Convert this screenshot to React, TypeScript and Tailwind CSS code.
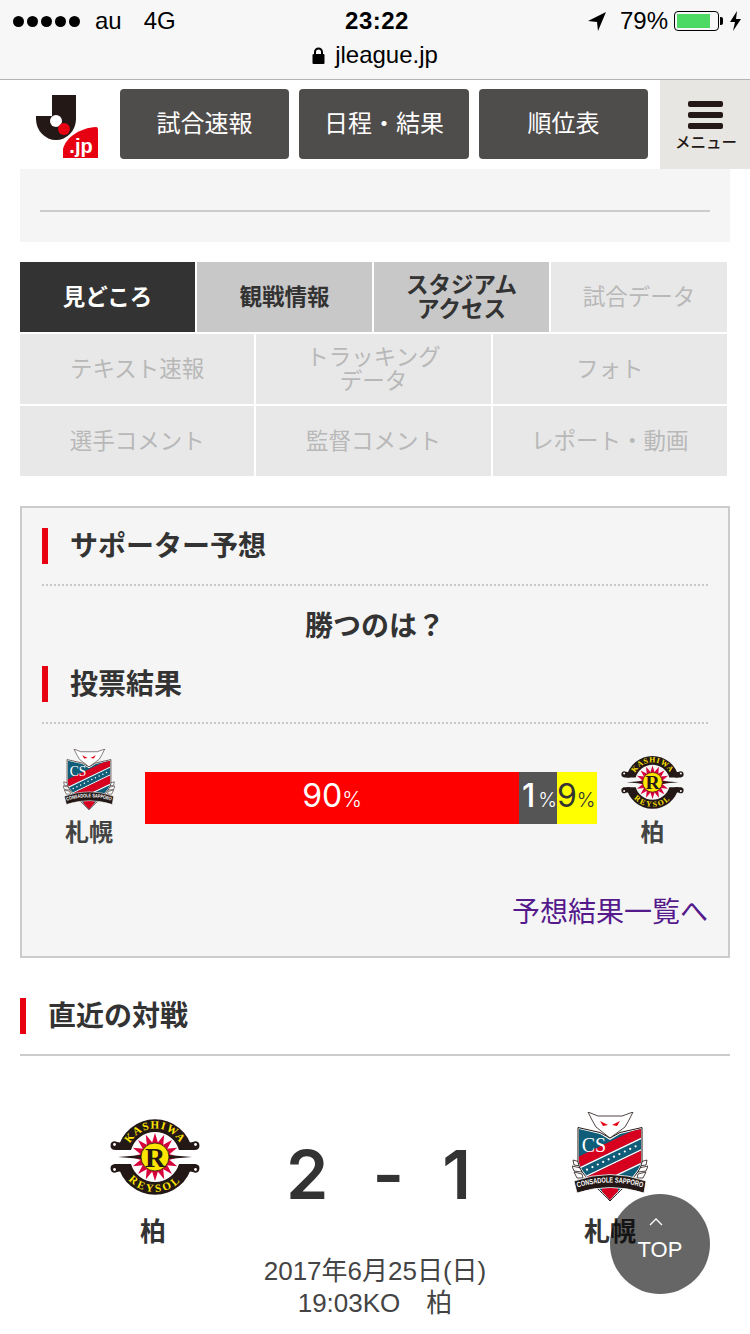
const SIGNAL = [0, 1, 2, 3, 4];

function StatusBar() {
  return (
    <div className="h-[80px] bg-[#f7f7f7] border-b-[1px] border-[#b4b4b4] relative">
      <div className="flex items-center justify-between h-[42px] pl-[13px] pr-[9px] text-[24px] text-black">
        <div className="flex items-center w-[230px]">
          <div className="flex gap-[3px]">
            {SIGNAL.map((i) => (
              <span key={i} className="w-[11px] h-[11px] rounded-full bg-black" />
            ))}
          </div>
          <span className="ml-[15px] leading-none">au</span>
          <span className="ml-[22px] leading-none">4G</span>
        </div>
        <span className="font-bold leading-none tracking-[0.5px]">23:22</span>
        <div className="flex items-center justify-end w-[230px]">
          <svg width="20" height="20" viewBox="0 0 20 20">
            <path d="M19 1 L1 10 L10 11 L11 20 Z" fill="#000" />
          </svg>
          <span className="ml-[13px] leading-none">79%</span>
          <div className="ml-[6px] w-[45px] h-[20px] border border-black rounded-[4px] p-[2px]">
            <div className="w-[33px] h-full bg-[#4cd964]" />
          </div>
          <span className="w-[3px] h-[8px] bg-black rounded-r-[2px] ml-[1px]" />
          <svg className="ml-[7px]" width="11" height="20" viewBox="0 0 11 20">
            <path d="M7 0 L0 11 L5 11 L3 20 L11 8 L6 8 Z" fill="#000" />
          </svg>
        </div>
      </div>
      <div className="flex items-center justify-center gap-[10px] text-[24px] text-black leading-none mt-[1px]">
        <svg width="13" height="17" viewBox="0 0 13 17">
          <path d="M3 7 V5 a3.5 3.5 0 0 1 7 0 V7" fill="none" stroke="#000" strokeWidth="2" />
          <rect x="0.5" y="7" width="12" height="10" rx="1" fill="#000" />
        </svg>
        <span>jleague.jp</span>
      </div>
    </div>
  );
}

function JLogo() {
  return (
    <svg width="63" height="64" viewBox="0 0 63 64">
      <path d="M16 0 H40 V24 A20 21 0 0 1 0 24 V21 H16 Z" fill="#231815" />
      <circle cx="20" cy="26" r="6" fill="#fff" />
      <circle cx="28" cy="34" r="6" fill="#e60012" />
      <path d="M25 63 V53 C28 40 44 32 62 31 V63 Z" fill="#fff" />
      <path d="M27 63 V54 C30 42 44 33 60 32 Q62 32 62 35 V63 Z" fill="#e60012" />
      <text x="45" y="58" textAnchor="middle" fontSize="20" fontWeight="700" fill="#fff" fontFamily="Liberation Sans">.jp</text>
    </svg>
  );
}

function NavButton({ label, width }: { label: string; width: string }) {
  return (
    <div className={`${width} h-[70px] rounded-[4px] bg-[#4f4d4b] text-white text-[24px] flex items-center justify-center`}>
      {label}
    </div>
  );
}

function Header() {
  return (
    <div className="flex h-[89px] bg-white">
      <div className="w-[120px] pl-[36px] pt-[15px]">
        <JLogo />
      </div>
      <div className="flex gap-[10px] pt-[9px]">
        <NavButton label="試合速報" width="w-[169px]" />
        <NavButton label="日程・結果" width="w-[170px]" />
        <NavButton label="順位表" width="w-[169px]" />
      </div>
      <div className="ml-[12px] w-[90px] bg-[#e8e6e2] flex flex-col items-center pt-[21px]">
        <div className="flex flex-col gap-[5px]">
          <span className="block w-[35px] h-[6px] rounded-[2px] bg-[#231815]" />
          <span className="block w-[35px] h-[6px] rounded-[2px] bg-[#231815]" />
          <span className="block w-[35px] h-[6px] rounded-[2px] bg-[#231815]" />
        </div>
        <span className="text-[15.5px] leading-none text-[#231815] mt-[6px] ml-[2px] font-medium">メニュー</span>
      </div>
    </div>
  );
}

function Tab({ label, active, on, className }: { label: string; active?: boolean; on?: boolean; className: string }) {
  const tone = active
    ? "bg-[#333333] text-white font-bold"
    : on
      ? "bg-[#c8c8c8] text-[#333333] font-bold"
      : "bg-[#e8e8e8] text-[#b8b8b8]";
  return (
    <div className={`${className} h-[70px] pt-[1px] flex items-center justify-center text-center text-[22.5px] leading-[24px] ${tone}`}>
      {label}
    </div>
  );
}

function Tabs() {
  return (
    <div className="mt-[20px] ml-[20px] w-[707px] flex flex-col gap-[2px]">
      <div className="flex gap-[2px]">
        <Tab label="見どころ" active className="w-[175px]" />
        <Tab label="観戦情報" on className="w-[175px]" />
        <Tab label={"スタジアム\nアクセス"} on className="w-[175px] whitespace-pre-line" />
        <Tab label="試合データ" className="w-[176px]" />
      </div>
      <div className="flex gap-[2px]">
        <Tab label="テキスト速報" className="flex-1" />
        <Tab label={"トラッキング\nデータ"} className="flex-1 whitespace-pre-line" />
        <Tab label="フォト" className="flex-1" />
      </div>
      <div className="flex gap-[2px]">
        <Tab label="選手コメント" className="flex-1" />
        <Tab label="監督コメント" className="flex-1" />
        <Tab label="レポート・動画" className="flex-1" />
      </div>
    </div>
  );
}

function Heading({ label }: { label: string }) {
  return (
    <div className="flex items-center h-[36px] border-l-[6px] border-[#e60012] pl-[22px] pt-[2px] text-[28px] font-bold text-[#333333] leading-none">
      {label}
    </div>
  );
}

// 90 wide, 78 tall, centred on 45,39
function Kashiwa({ size }: { size: number }) {
  const rays = Array.from({ length: 16 }, (_, i) => i * 22.5);
  return (
    <svg width={size} height={(size * 78) / 90} viewBox="0 0 90 78">
      <defs>
        <path id="ktop" d="M16.5 39 A28.5 28.5 0 0 1 73.5 39" />
        <path id="kbot" d="M10 39 A35 35 0 0 0 80 39" />
      </defs>
      <path d="M1 30 C-1 24 4 22 7 24 L13 25 V32 H5 C3 32 2 31 1 30 Z" fill="#231815" />
      <path d="M89 30 C91 24 86 22 83 24 L77 25 V32 H85 C87 32 88 31 89 30 Z" fill="#231815" />
      <path d="M1 48 C-1 54 4 56 7 54 L13 53 V46 H5 C3 46 2 47 1 48 Z" fill="#231815" />
      <path d="M89 48 C91 54 86 56 83 54 L77 53 V46 H85 C87 46 88 47 89 48 Z" fill="#231815" />
      <circle cx="4.5" cy="26.5" r="1.4" fill="#fff" />
      <circle cx="85.5" cy="26.5" r="1.4" fill="#fff" />
      <circle cx="4.5" cy="51.5" r="1.4" fill="#fff" />
      <circle cx="85.5" cy="51.5" r="1.4" fill="#fff" />
      <path d="M7.7 32 A38 38 0 0 1 82.3 32 H69 A25 25 0 0 0 21 32 Z" fill="#231815" />
      <path d="M7.7 46 A38 38 0 0 0 82.3 46 H69 A25 25 0 0 1 21 46 Z" fill="#231815" />
      <text fontSize="11" fontWeight="700" fill="#ffe600" fontFamily="Liberation Serif" letterSpacing="1.2">
        <textPath href="#ktop" startOffset="50%" textAnchor="middle">KASHIWA</textPath>
      </text>
      <text fontSize="11" fontWeight="700" fill="#ffe600" fontFamily="Liberation Serif" letterSpacing="2.5">
        <textPath href="#kbot" startOffset="50%" textAnchor="middle">REYSOL</textPath>
      </text>
      {rays.map((a) => (
        <path key={a} d="M41 28 L45 15 L49 28 Z" fill="#d7003a" transform={`rotate(${a} 45 39)`} />
      ))}
      <path d="M8 39 L32 37 V41 Z" fill="#231815" />
      <path d="M82 39 L58 37 V41 Z" fill="#231815" />
      <circle cx="45" cy="39" r="14" fill="#ffe600" stroke="#231815" strokeWidth="0.8" />
      <text x="45" y="49" textAnchor="middle" fontSize="28" fontWeight="700" fontFamily="Liberation Serif" fill="#231815">R</text>
    </svg>
  );
}

function band(base: number, h: number) {
  // diagonal stripe across the shield, rising to the right
  const y0 = base + 3.84;
  const y1 = base - 32.64;
  return `M0 ${y0} L76 ${y1} V${y1 + h} L0 ${y0 + h} Z`;
}

// 76 wide, 89 tall
function Sapporo({ size }: { size: number }) {
  const stars = Array.from({ length: 10 }, (_, i) => i);
  return (
    <svg width={size} height={(size * 89) / 76} viewBox="0 0 76 89">
      <defs>
        <clipPath id="shield">
          <path d="M7 17 L28 22 L38 28 L48 22 L69 17 V50 C67 62 50 74 38 88 C26 74 9 62 7 50 Z" />
        </clipPath>
        <path id="banner" d="M4 76 Q38 65 72 76" />
      </defs>
      <path d="M1 48 L8 50 L9 54 L2 53 Z M0 54 L9 56 L10 60 L2 59 Z M2 60 L10 62 L11 66 L5 66 Z" fill="#fff" stroke="#231815" strokeWidth="0.8" />
      <path d="M75 48 L68 50 L67 54 L74 53 Z M76 54 L67 56 L66 60 L74 59 Z M74 60 L66 62 L65 66 L71 66 Z" fill="#fff" stroke="#231815" strokeWidth="0.8" />
      <path d="M6 15.5 L28 20.5 L38 26 L48 20.5 L70 15.5 V50 C68 63 51 75 38 89 C25 75 8 63 6 50 Z" fill="#fff" stroke="#231815" strokeWidth="1" />
      <g clipPath="url(#shield)">
        <rect x="0" y="10" width="76" height="80" fill="#0f5d78" />
        <path d={band(44, 11)} fill="#d7001f" />
        <path d={band(55, 1.6)} fill="#fff" />
        <path d={band(66.5, 1.6)} fill="#fff" />
        <path d={band(68, 12)} fill="#d7001f" />
        <path d={band(80, 1.6)} fill="#fff" />
        <rect x="30" y="76" width="16" height="14" fill="#d7001f" />
      </g>
      <path d="M16 0 L26 4 H50 L61 0 L57 8 L53 15 L38 26 L24 15 L20 8 Z" fill="#fff" stroke="#231815" strokeWidth="0.8" />
      <path d="M28 9 L36 13 L31 14 Z M48 9 L40 13 L45 14 Z" fill="#e60012" />
      <text x="22" y="40" textAnchor="middle" fontSize="20" fontFamily="Liberation Serif" fill="#fff">CS</text>
      {stars.map((i) => (
        <circle key={i} cx={15 + i * 5.4} cy={57.7 - i * 2.6} r="1.1" fill="#fff" />
      ))}
      <path d="M2 69 Q38 56 74 69 L72 81 Q38 70 5 81 Z" fill="#231815" stroke="#fff" strokeWidth="0.8" />
      <text fontSize="7.5" fontWeight="700" fontFamily="Liberation Sans" fill="#fff">
        <textPath href="#banner" startOffset="50%" textAnchor="middle" textLength="66" lengthAdjust="spacingAndGlyphs">CONSADOLE SAPPORO</textPath>
      </text>
    </svg>
  );
}

function VoteCard() {
  return (
    <div className="mt-[30px] mx-[20px] h-[452px] border-2 border-[#cccccc] bg-[#f5f5f5] px-[20px] pt-[20px]">
      <Heading label="サポーター予想" />
      <div className="mt-[20px] border-t-2 border-dotted border-[#c8c8c8]" />
      <div className="mt-[23px] text-center text-[28px] font-bold text-[#333333] leading-[36px]">勝つのは？</div>
      <div className="mt-[21px]">
        <Heading label="投票結果" />
      </div>
      <div className="mt-[20px] border-t-2 border-dotted border-[#c8c8c8]" />
      <div className="flex mt-[25px] items-start">
        <div className="w-[94px] flex flex-col items-center">
          <Sapporo size={52} />
          <span className="text-[24px] font-bold text-[#444444] leading-none mt-[11px]">札幌</span>
        </div>
        <div className="ml-[9px] w-[452px] h-[52px] mt-[23px] flex text-[#ffffff] text-[32px] leading-[48px] font-['Inter',sans-serif]">
          <div className="w-[374px] bg-[#ff0000] text-center">90<span className="text-[21px] font-light">%</span></div>
          <div className="w-[38px] bg-[#555555] whitespace-nowrap overflow-hidden pl-[3px] font-medium">1<span className="text-[20px] font-light ml-[3px]">%</span></div>
          <div className="w-[40px] bg-[#ffff00] text-[#333333] whitespace-nowrap overflow-hidden">9<span className="text-[20px] font-light">%</span></div>
        </div>
        <div className="flex-1 flex flex-col items-center pt-[6px]">
          <Kashiwa size={63} />
          <span className="text-[24px] font-bold text-[#444444] leading-none mt-[11px]">柏</span>
        </div>
      </div>
      <div className="mt-[50px] text-right text-[28px] leading-[36px] text-[#551a8b]">予想結果一覧へ</div>
    </div>
  );
}

function LastMatch() {
  return (
    <div className="mx-[20px] mt-[40px]">
      <Heading label="直近の対戦" />
      <div className="mt-[20px] border-t-2 border-[#cccccc]" />
      <div className="flex mt-[52px] items-start">
        <div className="w-[266px] flex flex-col items-center">
          <div className="h-[111px] pt-[10px] pl-[4px]">
            <Kashiwa size={90} />
          </div>
          <span className="text-[26px] font-bold text-[#333333] leading-none">柏</span>
        </div>
        <div className="w-[204px] pr-[19px] mt-[32px] flex justify-between text-[68px] leading-none text-[#333333] font-['Inter',sans-serif] font-semibold">
          <span>2</span>
          <span className="ml-[6px]">-</span>
          <span>1</span>
        </div>
        <div className="w-[240px] flex flex-col items-center">
          <div className="h-[111px] pt-[4px]">
            <Sapporo size={76} />
          </div>
          <span className="text-[26px] font-bold text-[#333333] leading-none">札幌</span>
        </div>
      </div>
      <div className="mt-[10px] text-center text-[26px] leading-[32px] text-[#444444]">
        <div>2017年6月25日(日)</div>
        <div>19:03KO　柏</div>
      </div>
    </div>
  );
}

export default function App() {
  return (
    <div className="relative w-[750px] h-[1334px] overflow-hidden bg-white font-['Liberation_Sans','Noto_Sans_CJK_JP',sans-serif]">
      <StatusBar />
      <Header />
      <div className="mx-[20px] h-[73px] bg-[#f5f5f5] px-[20px] pt-[41px]">
        <div className="border-t-2 border-[#cccccc]" />
      </div>
      <Tabs />
      <VoteCard />
      <LastMatch />
      <div className="absolute left-[610px] top-[1194px] w-[100px] h-[100px] rounded-full bg-black/60 text-white text-center flex flex-col items-center justify-center pb-[9px]">
        <svg width="14" height="8" viewBox="0 0 14 8" className="mb-[13px] ml-[-8px]">
          <path d="M1 7 L7 1 L13 7" fill="none" stroke="#fff" strokeWidth="1.3" />
        </svg>
        <span className="text-[22px] leading-none">TOP</span>
      </div>
    </div>
  );
}
